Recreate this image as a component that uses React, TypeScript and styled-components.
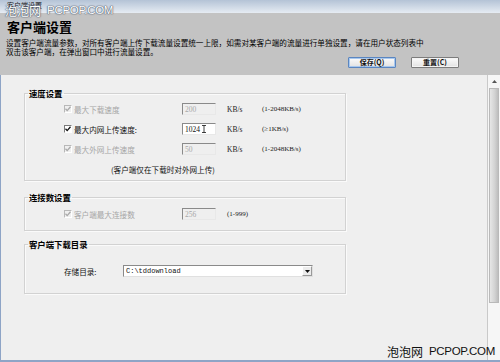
import styled, { createGlobalStyle } from 'styled-components'

const GlobalStyle = createGlobalStyle`
  html, body {
    margin: 0;
    padding: 0;
    width: 500px;
    height: 362px;
    overflow: hidden;
    background: #efefef;
  }
  body {
    font-family: "Noto Sans CJK SC", "Liberation Sans", sans-serif;
    color: #000;
  }
`

const Window = styled.div`
  position: relative;
  width: 500px;
  height: 362px;
  display: flex;
  flex-direction: column;
  overflow: hidden;
`

const TitleBar = styled.div`
  flex: none;
  height: 13px;
  box-sizing: border-box;
  padding-left: 7px;
  background: linear-gradient(#b4c3d6, #e6ecf3);
  font-size: 7px;
  line-height: 10px;
  color: #222;
`

const Header = styled.div`
  flex: none;
  height: 62px;
  box-sizing: border-box;
  padding: 7px 41px 0 7px;
  background: #c3c3c3;
  display: flex;
  flex-direction: column;
`

const Title = styled.h1`
  margin: 0;
  font-size: 13px;
  line-height: 14px;
  font-weight: bold;
`

const Desc = styled.p`
  margin: 4px 0 0 -1px;
  font-size: 7.6px;
  line-height: 9px;
  white-space: nowrap;
`

const Actions = styled.div`
  display: flex;
  justify-content: flex-end;
  gap: 15px;
  margin-top: 1px;
`

const Button = styled.button<{ $primary?: boolean }>`
  width: 48px;
  height: 11px;
  padding: 0;
  box-sizing: border-box;
  font-family: inherit;
  font-size: 7px;
  line-height: 9px;
  font-weight: bold;
  color: #111;
  border-radius: 1px;
  border: 1px solid ${p => (p.$primary ? '#5b86c0' : '#7c7c7c')};
  background: linear-gradient(#fbfbfb, #e2e2e2);
  box-shadow: ${p => (p.$primary ? 'inset 0 0 0 1px #a8c8ee' : 'inset 0 0 0 1px #f4f4f4')};
`

const Body = styled.div`
  flex: 1;
  min-height: 0;
  display: flex;
  background: #efefef;
  border-left: 1px solid #8ea4c6;
  border-bottom: 2px solid #8ea4c6;
`

const Content = styled.div`
  flex: 1;
  padding: 13px 0 0 23px;
  display: flex;
  flex-direction: column;
`

const Group = styled.fieldset<{ $mt?: number; $pt: number; $pb: number }>`
  width: 322px;
  box-sizing: border-box;
  min-width: 0;
  margin: ${p => p.$mt ?? 0}px 0 0 0;
  padding: ${p => p.$pt}px 0 ${p => p.$pb}px 3px;
  border: 1px solid #d2d2d2;
  box-shadow: inset 1px 1px 0 #fafafa, 1px 1px 0 #fafafa;
`

const Legend = styled.legend`
  padding: 0 1px;
  margin: 0;
  font-size: 8.4px;
  line-height: 10px;
  font-weight: bold;
`

const Rows = styled.div`
  padding-left: 36px;
`

const Row = styled.div<{ $cols?: string }>`
  height: 20px;
  display: grid;
  grid-template-columns: ${p => p.$cols ?? '10px 108px 45px 35px auto'};
  align-items: center;
`

const Check = styled.span<{ $disabled?: boolean }>`
  width: 8px;
  height: 8px;
  box-sizing: border-box;
  display: inline-flex;
  align-items: center;
  justify-content: center;
  border-top: 1px solid ${p => (p.$disabled ? '#b8b8b8' : '#7a7a7a')};
  border-left: 1px solid ${p => (p.$disabled ? '#b8b8b8' : '#7a7a7a')};
  border-right: 1px solid #fff;
  border-bottom: 1px solid #fff;
  background: ${p => (p.$disabled ? '#efefef' : '#fff')};
  color: ${p => (p.$disabled ? '#a8a8a8' : '#111')};
`

const Label = styled.span<{ $disabled?: boolean }>`
  font-size: 7.6px;
  color: ${p => (p.$disabled ? '#a6a6a6' : '#111')};
  white-space: nowrap;
`

const Field = styled.div<{ $disabled?: boolean }>`
  width: 34px;
  height: 12px;
  box-sizing: border-box;
  display: flex;
  align-items: center;
  padding-left: 2px;
  border-top: 1px solid #8a8a8a;
  border-left: 1px solid #8a8a8a;
  border-right: 1px solid #e8e8e8;
  border-bottom: 1px solid #e8e8e8;
  background: ${p => (p.$disabled ? '#efefef' : '#fff')};
  color: ${p => (p.$disabled ? '#a8a8a8' : '#111')};
  font-family: "Liberation Serif", serif;
  font-size: 7.5px;
`

const Unit = styled.span`
  font-family: "Liberation Serif", serif;
  font-size: 7.5px;
  color: #222;
  white-space: nowrap;
`

const Range = styled.span`
  font-family: "Liberation Serif", serif;
  font-size: 7px;
  color: #222;
  white-space: nowrap;
`

const Note = styled.div`
  height: 20px;
  display: flex;
  align-items: center;
  padding-left: 47px;
  font-size: 7.6px;
  color: #111;
`

const Select = styled.div`
  width: 190px;
  height: 12px;
  box-sizing: border-box;
  display: flex;
  align-items: center;
  background: #fff;
  border-top: 1px solid #8a8a8a;
  border-left: 1px solid #8a8a8a;
  border-right: 1px solid #e0e0e0;
  border-bottom: 1px solid #e0e0e0;
`

const SelectText = styled.span`
  flex: 1;
  padding-left: 2px;
  font-family: "Liberation Mono", monospace;
  font-size: 7px;
  color: #111;
`

const SelectArrow = styled.span`
  width: 10px;
  height: 10px;
  box-sizing: border-box;
  display: flex;
  align-items: center;
  justify-content: center;
  background: #ececec;
  border: 1px solid #9a9a9a;
  border-top-color: #fff;
  border-left-color: #fff;
`

const Scrollbar = styled.div`
  flex: none;
  width: 12px;
  display: flex;
  flex-direction: column;
  align-items: center;
  background: #f6f6f6;
  border-left: 1px solid #c9c9c9;
`

const ScrollArrow = styled.div`
  height: 13px;
  display: flex;
  align-items: center;
  justify-content: center;
`

const Thumb = styled.div`
  width: 10px;
  height: 215px;
  box-sizing: border-box;
  border: 1px solid #b9b9b9;
  background: linear-gradient(90deg, #e6e6e6, #d2d2d2 60%, #bdbdbd);
`

const Watermark = styled.div<{ $light?: boolean }>`
  position: absolute;
  display: flex;
  gap: 6px;
  font-size: 12px;
  line-height: 13px;
  color: ${p => (p.$light ? '#fff' : '#111')};
  text-shadow: ${p => (p.$light ? '0 0 1px #4a5566, 0 0 1px #4a5566, 0 0 2px #6a7688' : 'none')};
  white-space: nowrap;
`

const WatermarkLatin = styled.span`
  font-family: "Liberation Sans", sans-serif;
  font-size: 11.5px;
  letter-spacing: -0.3px;
`

const CheckMark = () => (
  <svg width="6" height="6" viewBox="0 0 6 6">
    <polyline points="0.5,2.8 2.2,4.6 5.5,0.8" fill="none" stroke="currentColor" strokeWidth="1.3" />
  </svg>
)

const Caret = () => (
  <svg width="4" height="8" viewBox="0 0 4 8" style={{ marginLeft: 2 }}>
    <path d="M0 0.5H4M2 0.5V7.5M0 7.5H4" fill="none" stroke="#111" strokeWidth="0.8" />
  </svg>
)

const speedRows = [
  { label: '最大下载速度', value: '200', range: '(1-2048KB/s)', disabled: true },
  { label: '最大内网上传速度:', value: '1024', range: '(≥1KB/s)', disabled: false },
  { label: '最大外网上传速度', value: '50', range: '(1-2048KB/s)', disabled: true },
]

export default function App() {
  return (
    <Window>
      <GlobalStyle />
      <TitleBar>客户端设置</TitleBar>

      <Header>
        <Title>客户端设置</Title>
        <Desc>
          设置客户端流量参数，对所有客户端上传下载流量设置统一上限，如需对某客户端的流量进行单独设置，请在用户状态列表中
          <br />
          双击该客户端，在弹出窗口中进行流量设置。
        </Desc>
        <Actions>
          <Button $primary>保存(Q)</Button>
          <Button>重置(C)</Button>
        </Actions>
      </Header>

      <Body>
        <Content>
          <Group $pt={1} $pb={1}>
            <Legend>速度设置</Legend>
            <Rows>
              {speedRows.map(row => (
                <Row key={row.label}>
                  <Check $disabled={row.disabled}>
                    <CheckMark />
                  </Check>
                  <Label $disabled={row.disabled}>{row.label}</Label>
                  <Field $disabled={row.disabled}>
                    {row.value}
                    {!row.disabled && <Caret />}
                  </Field>
                  <Unit>KB/s</Unit>
                  <Range>{row.range}</Range>
                </Row>
              ))}
              <Note>(客户端仅在下载时对外网上传)</Note>
            </Rows>
          </Group>

          <Group $mt={11} $pt={2} $pb={6}>
            <Legend>连接数设置</Legend>
            <Rows>
              <Row>
                <Check $disabled>
                  <CheckMark />
                </Check>
                <Label $disabled>客户端最大连接数</Label>
                <Field $disabled>256</Field>
                <Range>(1-999)</Range>
              </Row>
            </Rows>
          </Group>

          <Group $mt={8} $pt={12} $pb={12}>
            <Legend>客户端下载目录</Legend>
            <Rows>
              <Row $cols="59px 190px">
                <Label>存储目录:</Label>
                <Select>
                  <SelectText>C:\tddownload</SelectText>
                  <SelectArrow>
                    <svg width="5" height="3" viewBox="0 0 5 3">
                      <path d="M0 0H5L2.5 3Z" fill="#111" />
                    </svg>
                  </SelectArrow>
                </Select>
              </Row>
            </Rows>
          </Group>
        </Content>

        <Scrollbar>
          <ScrollArrow>
            <svg width="5" height="3" viewBox="0 0 5 3">
              <path d="M0 3H5L2.5 0Z" fill="#555" />
            </svg>
          </ScrollArrow>
          <Thumb />
        </Scrollbar>
      </Body>

      <Watermark $light style={{ left: 5, top: 4 }}>
        <span>泡泡网</span>
        <WatermarkLatin>PCPOP.COM</WatermarkLatin>
      </Watermark>
      <Watermark style={{ right: 5, bottom: 4 }}>
        <span>泡泡网</span>
        <WatermarkLatin>PCPOP.COM</WatermarkLatin>
      </Watermark>
    </Window>
  )
}
